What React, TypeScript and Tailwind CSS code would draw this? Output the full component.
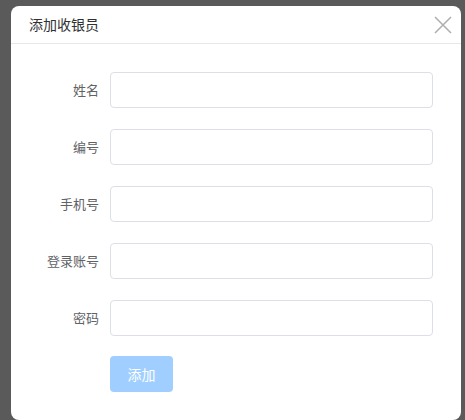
const fields = ["姓名", "编号", "手机号", "登录账号", "密码"];

export default function App() {
  return (
    <div
      className="w-[465px] h-[420px] overflow-hidden bg-[#5a5a5a] pt-[6px] pl-[11px]"
      style={{ fontFamily: '"Noto Sans CJK SC", "Noto Sans", sans-serif' }}
    >
      <div className="w-[450px] h-[414px] bg-white rounded-[8px]">
        {/* header */}
        <div className="h-[38px] flex items-center justify-between pl-[18px] pr-[9px] border-b border-[#e8e8e8]">
          <span className="text-[14px] text-[#303133]">添加收银员</span>
          <svg width="18" height="18" viewBox="0 0 18 18" fill="none">
            <path d="M1 1L17 17M17 1L1 17" stroke="#b0b0b0" strokeWidth="1.6" />
          </svg>
        </div>

        {/* form */}
        <div className="pt-[28px] flex flex-col gap-[21px]">
          {fields.map((label) => (
            <div key={label} className="flex items-center">
              <label className="w-[88px] text-right text-[13px] text-[#606266]">{label}</label>
              <input
                className="ml-[11px] w-[323px] h-[36px] rounded-[4px] border border-[#dcdfe6] bg-white px-3 text-[13px] outline-none"
                type="text"
              />
            </div>
          ))}
        </div>

        <div className="pl-[99px] mt-[20px]">
          <button className="w-[63px] h-[36px] rounded-[4px] bg-[#a0cfff] text-white text-[14px]">
            添加
          </button>
        </div>
      </div>
    </div>
  );
}
